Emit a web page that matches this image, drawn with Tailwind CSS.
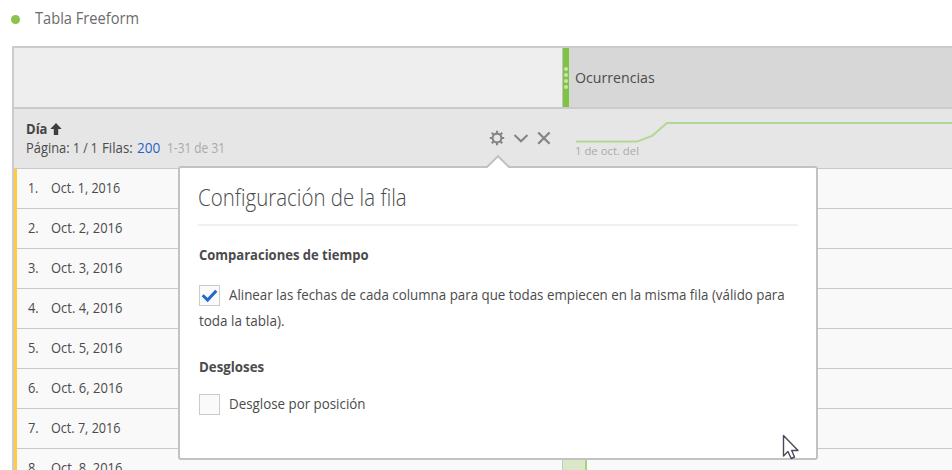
<!DOCTYPE html>
<html lang="es">
<head>
<meta charset="utf-8">
<title>Tabla Freeform</title>
<script src="https://cdn.jsdelivr.net/npm/@tailwindcss/browser@4"></script>
</head>
<body class="relative h-[470px] w-[952px] overflow-hidden bg-white font-['Open_Sans','Noto_Sans',sans-serif] text-[14px] text-[#4b4b4b]">
<header class="flex h-[46px] items-start pl-[11px] pt-[7px]">
  <span class="mt-[8px] size-[9px] rounded-full bg-[#8bc34a]"></span>
  <h1 class="ml-[15px] h-[22px] w-[104px] text-[16px] leading-[22px] text-[#6b6b6b]"><span class="inline-block origin-left scale-x-[0.915] whitespace-nowrap">Tabla Freeform</span></h1>
</header>
<main class="ml-[12px] h-[424px] overflow-hidden border-l-2 border-t-2 border-[#cbcbcb]">
  <div class="flex h-[61px] border-b-2 border-[#cbcbcb]">
    <div class="w-[549px] border-r border-[#c4c4c4] bg-[#eeeeee]"></div>
    <div class="flex w-[6px] flex-col items-center justify-center gap-[2px] bg-[#80c342]">
      <i class="size-[4px] rounded-full bg-[#c8e6a8]"></i><i class="size-[4px] rounded-full bg-[#c8e6a8]"></i><i class="size-[4px] rounded-full bg-[#c8e6a8]"></i><i class="size-[4px] rounded-full bg-[#c8e6a8]"></i>
    </div>
    <div class="flex flex-1 items-center bg-[#d7d7d7] pl-[6px]"><span class="inline-block origin-left scale-x-[0.945] whitespace-nowrap text-[15px]">Ocurrencias</span></div>
  </div>
  <div class="flex h-[60px] border-b border-[#c8c8c8] bg-[#e6e6e6]">
    <div class="w-[463px] pl-[12px] pt-[10px] leading-[19px]">
      <div class="flex items-center"><b class="w-[24px] font-bold text-[#444]"><span class="inline-block origin-left scale-x-[0.93]">Día</span></b>
        <svg class="size-[12px]" viewBox="0 0 12 12"><path fill="#3e3e3e" d="M6 0 11.7 6H8.2v6H3.8V6H.3z"/></svg></div>
      <div class="flex whitespace-nowrap">
        <span class="w-[47px]"><span class="inline-block origin-left scale-x-[0.92]">Página:</span></span><span class="w-[29px]"><span class="inline-block origin-left scale-x-[0.87]">1 / 1</span></span><span class="w-[35px]"><span class="inline-block origin-left scale-x-[0.95]">Filas:</span></span><span class="w-[30px] text-[#2a62c9]"><span class="inline-block origin-left scale-x-[0.97]">200</span></span><span class="text-[#aaaaaa]"><span class="inline-block origin-left scale-x-[0.85]">1-31 de 31</span></span>
      </div>
    </div>
    <div class="flex w-[98px] gap-[8px] pl-[12px] pt-[21px]">
      <svg class="size-[16px]" viewBox="0 0 16 16" fill="none" stroke="#858585"><circle cx="8" cy="8" r="4.4" stroke-width="2.1"/><path stroke-width="2.1" d="M8 .8v2.8M8 12.4v2.8M.8 8h2.8M12.4 8h2.8M2.8 2.8l2 2M11.2 11.2l2 2M2.8 13.2l2-2M11.2 4.8l2-2"/></svg>
      <svg class="size-[16px]" viewBox="0 0 16 16" fill="none" stroke="#858585" stroke-width="2"><path d="m1.5 5 6.5 6.3L14.5 5"/></svg>
      <svg class="ml-[-1px] size-[16px]" viewBox="0 0 16 16" fill="none" stroke="#858585" stroke-width="2.3"><path d="m2.2 2.5 11.4 11.2M13.6 2.5 2.2 13.7"/></svg>
    </div>
    <div class="flex-1">
      <svg class="block h-[35px] w-[377px]" viewBox="0 0 377 35" fill="none" stroke="#b4d694" stroke-width="2"><path d="M1 32.6H62L77 27 92 14H377"/></svg>
      <div class="h-[14px] text-[11px] leading-[14px] text-[#aaa]"><span class="inline-block origin-left scale-x-[1.03]">1 de oct. del</span></div>
    </div>
  </div>
  <ol class="h-[302px] border-l-3 border-[#ffca45] bg-[#f9f9f9]">
    <li class="flex h-[40px] items-center border-b border-[#c8c8c8] pb-[2px] pl-[11px]"><span class="w-[23px]"><span class="inline-block origin-left scale-x-[0.87]">1.</span></span><span class="inline-block origin-left scale-x-[0.895]">Oct. 1, 2016</span></li>
    <li class="flex h-[40px] items-center border-b border-[#c8c8c8] pb-[2px] pl-[11px]"><span class="w-[23px]"><span class="inline-block origin-left scale-x-[0.92]">2.</span></span><span class="inline-block origin-left scale-x-[0.925]">Oct. 2, 2016</span></li>
    <li class="flex h-[40px] items-center border-b border-[#c8c8c8] pb-[2px] pl-[11px]"><span class="w-[23px]"><span class="inline-block origin-left scale-x-[0.92]">3.</span></span><span class="inline-block origin-left scale-x-[0.925]">Oct. 3, 2016</span></li>
    <li class="flex h-[40px] items-center border-b border-[#c8c8c8] pb-[2px] pl-[11px]"><span class="w-[23px]"><span class="inline-block origin-left scale-x-[0.92]">4.</span></span><span class="inline-block origin-left scale-x-[0.925]">Oct. 4, 2016</span></li>
    <li class="flex h-[40px] items-center border-b border-[#c8c8c8] pb-[2px] pl-[11px]"><span class="w-[23px]"><span class="inline-block origin-left scale-x-[0.92]">5.</span></span><span class="inline-block origin-left scale-x-[0.925]">Oct. 5, 2016</span></li>
    <li class="flex h-[40px] items-center border-b border-[#c8c8c8] pb-[2px] pl-[11px]"><span class="w-[23px]"><span class="inline-block origin-left scale-x-[0.92]">6.</span></span><span class="inline-block origin-left scale-x-[0.93]">Oct. 6, 2016</span></li>
    <li class="flex h-[40px] items-center border-b border-[#c8c8c8] pb-[2px] pl-[11px]"><span class="w-[23px]"><span class="inline-block origin-left scale-x-[0.92]">7.</span></span><span class="inline-block origin-left scale-x-[0.9]">Oct. 7, 2016</span></li>
    <li class="flex h-[40px] items-start pl-[11px] leading-[38px]"><span class="w-[23px]"><span class="inline-block origin-left scale-x-[0.92]">8.</span></span><span class="w-[511px]"><span class="inline-block origin-left scale-x-[0.925]">Oct. 8, 2016</span></span><span class="h-full w-[25px] border-l border-r-2 border-l-[#c8c8c8] border-r-[#a9d47c] bg-[#dae8ca]"></span></li>
  </ol>
</main>
<section class="absolute left-[178px] top-[166px] h-[294px] w-[640px] rounded-[3px] border-2 border-[#c2c2c2] bg-white px-[18px]">
  <svg class="absolute left-[304px] top-[-15px] h-[16px] w-[28px]" viewBox="0 0 28 16"><path fill="#fff" d="M2 16 14 3.5 26 16z"/><path fill="none" stroke="#c2c2c2" stroke-width="2" d="M0 14H3L14 3.2 25 14H28"/></svg>
  <div class="flex h-[58px] items-center border-b-2 border-[#f0f0f0] pt-[2px]"><h2 class="origin-left scale-x-[0.89] whitespace-nowrap text-[23px] font-light">Configuración de la fila</h2></div>
  <h3 class="mt-[18px] h-[22px] origin-left scale-x-[0.93] pl-px font-bold leading-[22px]">Comparaciones de tiempo</h3>
  <div class="mt-[18px] flex h-[22px] items-center text-[14.5px]">
    <span class="ml-px flex size-[21px] shrink-0 items-center justify-center border border-[#cbcbcb] bg-[#fafafa]"><svg class="size-[17px]" viewBox="0 0 18 18"><path fill="none" stroke="#2667cb" stroke-width="3.2" d="m1.8 8.7 5.2 5.2L16.2 4"/></svg></span>
    <span class="ml-[9px] origin-left scale-x-[0.919] whitespace-nowrap">Alinear las fechas de cada columna para que todas empiecen en la misma fila (válido para</span>
  </div>
  <p class="mt-[5px] h-[20px] origin-left scale-x-[0.93] pl-px text-[14.5px] leading-[20px]">toda la tabla).</p>
  <h3 class="mt-[25px] h-[22px] origin-left scale-x-[0.95] pl-px font-bold leading-[22px]">Desgloses</h3>
  <div class="mt-[15px] flex h-[22px] items-center text-[14.5px]">
    <span class="ml-px size-[21px] shrink-0 border border-[#cbcbcb] bg-[#fafafa]"></span>
    <span class="ml-[9px] origin-left scale-x-[0.92] whitespace-nowrap">Desglose por posición</span>
  </div>
</section>
<svg class="absolute left-[782px] top-[434px] h-[28px] w-[18px]" viewBox="0 0 18 28"><path fill="#fff" stroke="#4a4a5c" stroke-width="1.4" stroke-linejoin="round" d="M1.5 1.5V22L6 17.5 9.2 24.5 12.5 23 9.7 16.5H16z"/></svg>
</body>
</html>
